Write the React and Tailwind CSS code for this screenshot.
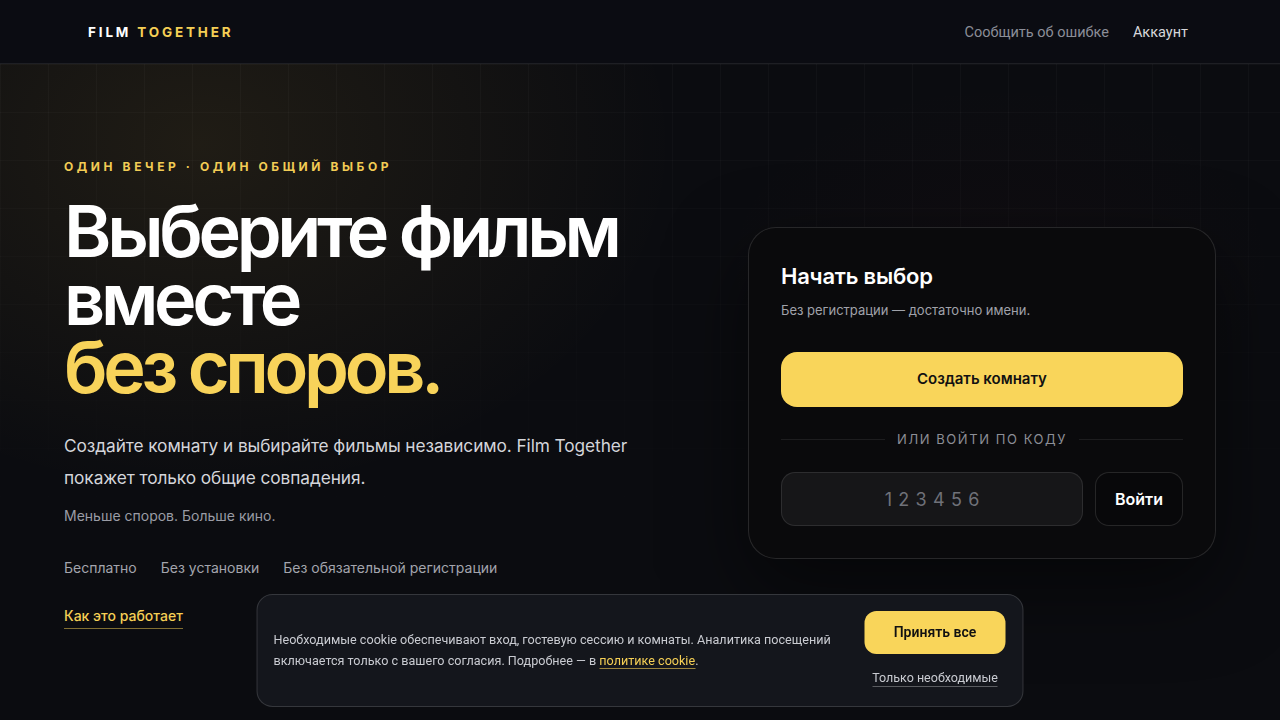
import React from 'react';

const sans = { fontFamily: 'Inter, "Noto Sans", sans-serif' };

const Header = () => (
    <header className="h-16 border-b border-white/[0.08] bg-[#0b0c12] shrink-0">
        <div className="max-w-6xl mx-auto h-full px-6 flex items-center justify-between">
            <div className="text-[13.5px] font-bold tracking-[0.21em] text-white pt-0.5">
                FILM <span className="text-[#f5cf55]">TOGETHER</span>
            </div>
            <nav className="flex items-center gap-6 text-[14.5px] font-['Roboto',sans-serif] mr-1 pt-0.5">
                <a className="text-[#8b8e98]">Сообщить об ошибке</a>
                <a className="text-[#d6d7db]">Аккаунт</a>
            </nav>
        </div>
    </header>
);

const Hero = () => (
    <div className="flex flex-col">
        <p className="text-[12px] leading-4 font-bold tracking-[0.3em] text-[#f2cc55]">
            ОДИН ВЕЧЕР · ОДИН ОБЩИЙ ВЫБОР
        </p>
        <h1 className="mt-[22px] text-[72px] leading-[68px] font-semibold tracking-[-0.06em] text-white">
            Выберите фильм
            <br />
            вместе
            <br />
            <span className="text-[#f8d35a]">без споров.</span>
        </h1>
        <p className="mt-[29px] text-[17.3px] leading-8 tracking-[-0.005em] text-[#d4d5da] max-w-[600px]">
            Создайте комнату и выбирайте фильмы независимо. Film Together покажет только общие совпадения.
        </p>
        <p className="mt-3 text-[14px] leading-5 text-[#9a9ca5]">Меньше споров. Больше кино.</p>
        <div className="mt-8 flex gap-6 text-[14px] leading-5 text-[#a3a5ad]">
            <span>Бесплатно</span>
            <span>Без установки</span>
            <span>Без обязательной регистрации</span>
        </div>
        <div className="mt-[25px]">
            <a className="inline-block text-[14px] leading-5 font-medium text-[#f5cf55] border-b border-[#f5cf55]/50 pb-0.5">
                Как это работает
            </a>
        </div>
    </div>
);

const StartCard = () => (
    <div className="-mt-0.5 rounded-[28px] border border-white/[0.12] bg-[#0a0a0c] p-8 shadow-[0_30px_80px_rgba(0,0,0,0.5)]">
        <h2 className="text-[22px] leading-8 font-semibold text-white tracking-[-0.01em]">Начать выбор</h2>
        <p className="mt-2 text-[13px] leading-5 text-[#a0a2aa]">Без регистрации — достаточно имени.</p>
        <button className="mt-8 w-full h-[55px] rounded-2xl bg-[#f9d55a] text-[15px] font-semibold text-[#111]">
            Создать комнату
        </button>
        <div className="mt-[22px] flex items-center gap-3">
            <div className="flex-1 h-px bg-white/[0.08]" />
            <span className="text-[13px] leading-5 tracking-[0.12em] text-[#8c8e96]">ИЛИ ВОЙТИ ПО КОДУ</span>
            <div className="flex-1 h-px bg-white/[0.08]" />
        </div>
        <div className="mt-[23px] flex gap-3">
            <div className="flex-1 h-[54px] rounded-[14px] border border-white/[0.1] bg-[#161618] flex items-center justify-center text-[18px] tracking-[0.35em] text-[#6f7178] pl-[0.35em]">
                123456
            </div>
            <button className="h-[54px] w-[88px] rounded-[14px] border border-white/[0.12] bg-[#08080a] text-[16px] font-semibold text-white">
                Войти
            </button>
        </div>
    </div>
);

const CookieBanner = () => (
    <div className="fixed bottom-[13px] left-1/2 -translate-x-1/2 w-[767px] rounded-2xl border border-white/[0.14] bg-[#14161c] pl-4 pr-4 pt-4 pb-[17px] flex items-center gap-[25px] font-['Roboto',sans-serif]">
        <p className="w-[566px] shrink-0 text-[12.6px] leading-[21px] text-[#c9cbd1]">
            Необходимые cookie обеспечивают вход, гостевую сессию и комнаты. Аналитика посещений включается только с вашего согласия. Подробнее — в{' '}
            <a className="text-[#f5cf55] border-b border-[#f5cf55]/60">политике cookie</a>.
        </p>
        <div className="flex flex-col items-center gap-[16px] shrink-0">
            <button className="h-[43px] w-[141px] rounded-xl bg-[#f9d55a] text-[14px] font-semibold text-[#111]">
                Принять все
            </button>
            <a className="text-[12.5px] leading-4 text-[#c9cbd1] border-b border-white/30 mb-0.5">Только необходимые</a>
        </div>
    </div>
);

export default function App() {
    return (
        <div
            className="h-screen w-screen overflow-hidden flex flex-col bg-[#0b0c10] relative"
            style={sans}
        >
            <Header />
            <main className="relative flex-1 bg-[radial-gradient(ellipse_680px_500px_at_200px_80px,rgba(240,190,70,0.09),transparent_70%),radial-gradient(ellipse_400px_260px_at_1000px_200px,rgba(150,40,40,0.035),transparent_70%)]">
                <div className="absolute inset-0 pointer-events-none bg-[linear-gradient(to_right,rgba(255,255,255,0.028)_1px,transparent_1px),linear-gradient(to_bottom,rgba(255,255,255,0.028)_1px,transparent_1px)] bg-[size:48px_48px] [mask-image:linear-gradient(to_bottom,black,transparent_75%)]" />
                <div className="relative max-w-6xl mx-auto pt-[95px] grid grid-cols-[1fr_468px] items-center gap-10">
                    <Hero />
                    <StartCard />
                </div>
            </main>
            <CookieBanner />
        </div>
    );
}
